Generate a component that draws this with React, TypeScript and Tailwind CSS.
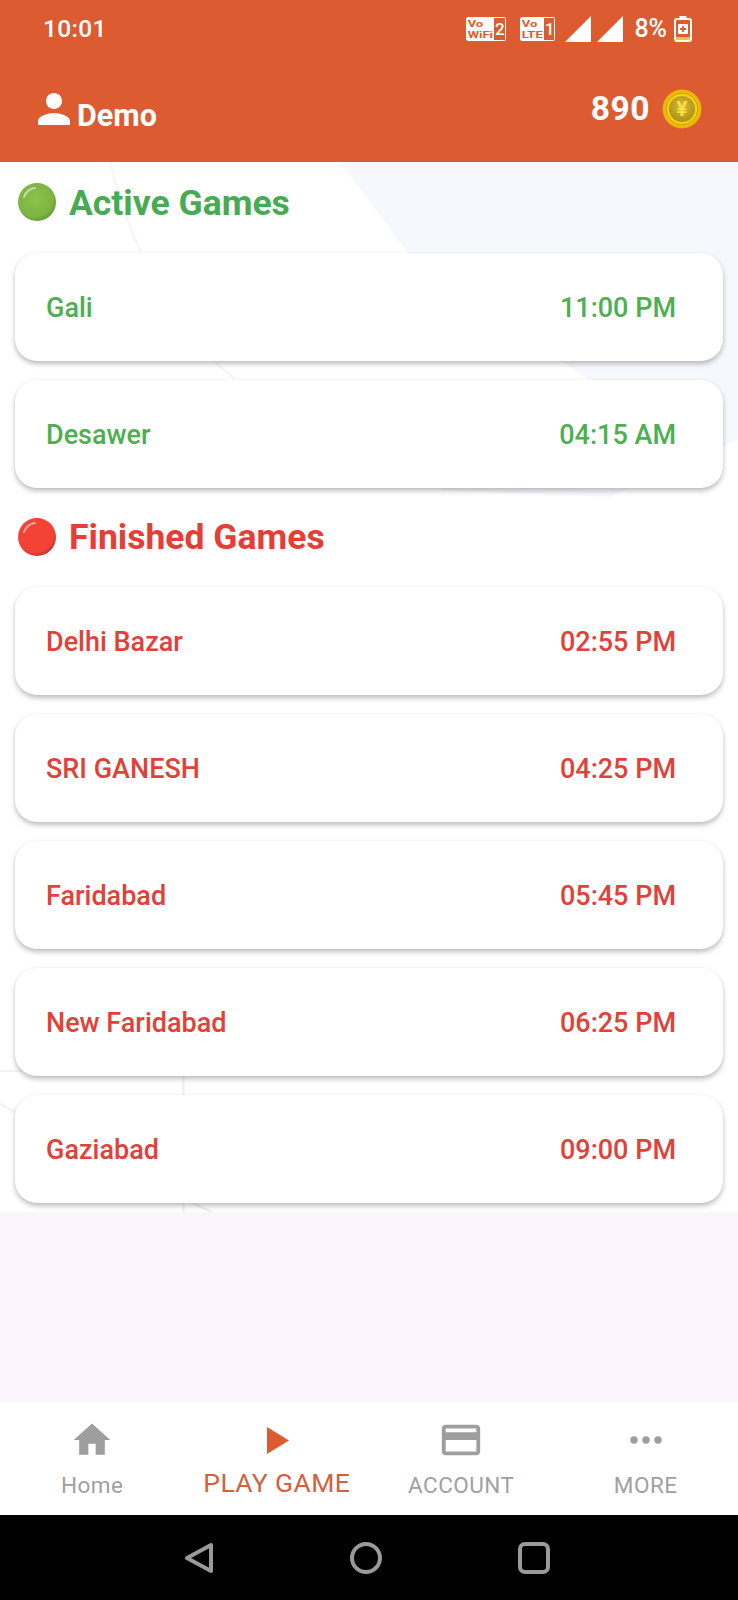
import React from "react";

const active = [
  ["Gali", "11:00 PM"],
  ["Desawer", "04:15 AM"],
];
const finished = [
  ["Delhi Bazar", "02:55 PM"],
  ["SRI GANESH", "04:25 PM"],
  ["Faridabad", "05:45 PM"],
  ["New Faridabad", "06:25 PM"],
  ["Gaziabad", "09:00 PM"],
];

function Ball({ id, light, mid, dark }: { id: string; light: string; mid: string; dark: string }) {
  return (
    <svg width="40" height="40" viewBox="0 0 40 40" className="shrink-0">
      <defs>
        <radialGradient id={id} cx="45%" cy="42%" r="60%">
          <stop offset="0%" stopColor={light} />
          <stop offset="80%" stopColor={mid} />
          <stop offset="100%" stopColor={dark} />
        </radialGradient>
      </defs>
      <circle cx="20" cy="20" r="19" fill={`url(#${id})`} />
      <path d="M7 15C9 10 13 6.500 18 6" stroke="#ffffff" strokeOpacity="0.55" strokeWidth="2" fill="none" strokeLinecap="round" />
    </svg>
  );
}

function Heading({ children, color, ball, tall }: { children: string; color: string; ball: React.ReactNode; tall?: boolean }) {
  return (
    <div className={tall ? "flex h-[82px] items-center gap-[12px] pl-[17px]" : "flex h-[80px] items-center gap-[12px] pl-[17px]"}>
      {ball}
      <span className={tall ? "mt-[2px] text-[35.500px] font-bold leading-none" : "mt-[3px] text-[35.500px] font-bold leading-none"} style={{ color }}>
        {children}
      </span>
    </div>
  );
}

function GameCard({ name, time, color }: { name: string; time: string; color: string }) {
  return (
    <div
      className="flex h-[108px] items-center justify-between rounded-[22px] bg-white pb-0 pl-[31px] pr-[47px] pt-[2px] text-[27px] font-medium shadow-[0_3px_5px_rgba(60,60,60,0.33),0_0_3px_rgba(0,0,0,0.04)]"
      style={{ color }}
    >
      <span>{name}</span>
      <span>{time}</span>
    </div>
  );
}

function VoBadge({ top, bottom, num }: { top: string; bottom: string; num: string }) {
  return (
    <div className="flex h-[24px] items-stretch rounded-[2px] border border-white bg-white">
      <div className="flex flex-col justify-center px-[1px] text-[13px] font-bold leading-[11px] text-[#dc5b30]">
        <span className="block h-[11px] scale-y-[0.72]">{top}</span>
        <span className="block h-[11px] scale-y-[0.72]">{bottom}</span>
      </div>
      <div className="flex items-center bg-[#dc5b30] pl-[1px] text-[17px] font-medium leading-none text-white">{num}</div>
    </div>
  );
}

function Signal() {
  return (
    <svg width="26" height="26" viewBox="0 0 26 26">
      <polygon points="26,0 26,26 0,26" fill="#ffffff" />
    </svg>
  );
}

function Coin() {
  return (
    <svg width="40" height="40" viewBox="0 0 40 40">
      <defs>
        <radialGradient id="coinOuter" cx="50%" cy="50%" r="50%">
          <stop offset="75%" stopColor="#f8cf14" />
          <stop offset="100%" stopColor="#e8ac08" />
        </radialGradient>
        <radialGradient id="coinInner" cx="50%" cy="40%" r="60%">
          <stop offset="0%" stopColor="#d4bb30" />
          <stop offset="100%" stopColor="#ad9216" />
        </radialGradient>
      </defs>
      <circle cx="20" cy="20" r="19.500" fill="url(#coinOuter)" />
      <circle cx="20" cy="20" r="16" fill="none" stroke="#c79a10" strokeWidth="1" />
      <circle cx="20" cy="20" r="13" fill="url(#coinInner)" />
      <text x="20" y="27" textAnchor="middle" fontSize="21" fontWeight="700" fontFamily="Roboto, sans-serif" fill="#f6e04a">
        ¥
      </text>
    </svg>
  );
}

function NavItem({ icon, label, active }: { icon: React.ReactNode; label: string; active?: boolean }) {
  return (
    <div className="flex flex-col items-center">
      <div className="flex h-[46px] items-center justify-center">{icon}</div>
      <span
        className={
          active
            ? "mt-[2px] h-[36px] text-[26.500px] leading-[36px] tracking-[0.4px] text-[#d4603c]"
            : "mt-[5px] h-[34px] text-[22.500px] leading-[34px] tracking-[0.5px] text-[#a0a0a0]"
        }
      >
        {label}
      </span>
    </div>
  );
}

export default function App() {
  return (
    <div className="flex h-[1600px] w-[738px] flex-col overflow-hidden bg-black font-['Roboto',sans-serif]">
      <header className="flex h-[162px] shrink-0 flex-col bg-[#dc5b30] text-white">
        <div className="flex h-[58px] items-center justify-between pl-[43px] pr-[46px]">
          <span className="text-[24.500px] font-medium tracking-[0.3px]">10:01</span>
          <div className="flex items-center">
            <VoBadge top="Vo" bottom="WiFi" num="2" />
            <div className="w-[14px]" />
            <VoBadge top="Vo" bottom="LTE" num="1" />
            <div className="w-[10px]" />
            <Signal />
            <div className="w-[6px]" />
            <Signal />
            <span className="ml-[11px] mr-[7px] text-[25px] font-medium">8%</span>
            <svg width="18" height="26" viewBox="0 0 18 26">
              <rect x="5.500" y="0" width="7" height="3" fill="#ffffff" />
              <rect x="1" y="3" width="16" height="22" rx="2" fill="none" stroke="#ffffff" strokeWidth="2" />
              <rect x="2" y="21" width="14" height="3" fill="#f4c542" />
              <rect x="4" y="8" width="10" height="10" rx="1" fill="#ffffff" />
              <path d="M9 10v6M6 13h6" stroke="#dc5b30" strokeWidth="1.800" />
            </svg>
          </div>
        </div>
        <div className="flex flex-1 items-start justify-between pl-[30px] pr-[36px] pt-[31px]">
          <div className="flex items-center">
            <svg width="48" height="48" viewBox="0 0 24 24" fill="#ffffff" className="-mt-[4px]">
              <path d="M12 12c2.210 0 4-1.790 4-4s-1.790-4-4-4-4 1.790-4 4 1.790 4 4 4zm0 2c-2.670 0-8 1.340-8 4v2h16v-2c0-2.660-5.330-4-8-4z" />
            </svg>
            <span className="-ml-[1px] mt-[11px] text-[30.500px] font-bold leading-none">Demo</span>
          </div>
          <div className="-mt-[5px] flex items-center gap-[12px]">
            <span className="text-[33.500px] font-bold tracking-[0.5px]">890</span>
            <Coin />
          </div>
        </div>
      </header>

      <main className="relative flex-1 bg-[#fcf5fd]">
        <svg
          className="absolute left-0 top-0"
          width="738"
          height="1050"
          viewBox="0 162 738 1050"
          fill="none"
        >
          <rect x="0" y="162" width="738" height="1050" fill="#ffffff" />
          <polygon
            points="340,162 738,162 738,440 610,497 440,490 610,400 587,379 563,362 407,252"
            fill="#f6f8fd"
          />
          <path d="M110 162C118 195 128 225 141 252" stroke="#f3f4fc" strokeWidth="2" />
          <path d="M215 362L235 379" stroke="#f1f2fb" strokeWidth="2" />
          <path d="M0 1071H22" stroke="#f1f2fb" strokeWidth="2" />
          <path d="M183.500 1076V1095M183.500 1203V1212" stroke="#ecedf8" strokeWidth="2" />
          <path d="M0 1104L15 1112" stroke="#f1f2fb" strokeWidth="2" />
          <path d="M192 1203L212 1212" stroke="#ecedf8" strokeWidth="2" />
        </svg>
        <div className="relative px-[15px]">
          <div className="-mx-[15px]">
            <Heading color="#46ab52" ball={<Ball id="ballGreen" light="#8bc34a" mid="#7cb342" dark="#5f9a2e" />}>
              Active Games
            </Heading>
          </div>
          <div className="mt-[11px] flex flex-col gap-[19px]">
            {active.map(([n, t]) => (
              <GameCard key={n} name={n} time={t} color="#4caf50" />
            ))}
          </div>
          <div className="-mx-[15px] mt-[8px]">
            <Heading tall color="#e53e36" ball={<Ball id="ballRed" light="#f44336" mid="#f44336" dark="#b5352c" />}>
              Finished Games
            </Heading>
          </div>
          <div className="mt-[9px] flex flex-col gap-[19px]">
            {finished.map(([n, t]) => (
              <GameCard key={n} name={n} time={t} color="#e04238" />
            ))}
          </div>
        </div>
      </main>

      <nav className="grid h-[112px] shrink-0 grid-cols-4 bg-white pt-[14px]">
        <NavItem
          label="Home"
          icon={
            <svg width="44" height="44" viewBox="0 0 24 24" fill="#9e9e9e">
              <path d="M10 20v-6h4v6h5v-8h3L12 3 2 12h3v8z" />
            </svg>
          }
        />
        <NavItem
          label="PLAY GAME"
          active
          icon={
            <svg width="22" height="27" viewBox="0 0 22 27" fill="#dc5b30" className="ml-[3px]">
              <polygon points="0,0 22,13.500 0,27" />
            </svg>
          }
        />
        <NavItem
          label="ACCOUNT"
          icon={
            <svg width="46" height="46" viewBox="0 0 24 24" fill="#9e9e9e">
              <path d="M20 4H4c-1.110 0-1.990.890-1.990 2L2 18c0 1.110.890 2 2 2h16c1.110 0 2-.890 2-2V6c0-1.110-.890-2-2-2zm0 14H4v-6h16v6zm0-10H4V6h16v2z" />
            </svg>
          }
        />
        <NavItem
          label="MORE"
          icon={
            <svg width="32" height="10" viewBox="0 0 32 10" fill="#9e9e9e">
              <circle cx="4" cy="5" r="3.700" />
              <circle cx="16" cy="5" r="3.700" />
              <circle cx="28" cy="5" r="3.700" />
            </svg>
          }
        />
      </nav>

      <div className="flex h-[85px] shrink-0 items-center justify-center gap-[136px] bg-black pr-[4px]">
        <svg width="30" height="32" viewBox="0 0 30 32" fill="none" stroke="#9a9a9a" strokeWidth="4" strokeLinejoin="round">
          <polygon points="3,16 27,3 27,29" />
        </svg>
        <svg width="32" height="32" viewBox="0 0 32 32" fill="none" stroke="#9a9a9a" strokeWidth="4">
          <circle cx="16" cy="16" r="14" />
        </svg>
        <svg width="32" height="32" viewBox="0 0 32 32" fill="none" stroke="#9a9a9a" strokeWidth="4">
          <rect x="2" y="2" width="28" height="28" rx="5" />
        </svg>
      </div>
    </div>
  );
}
